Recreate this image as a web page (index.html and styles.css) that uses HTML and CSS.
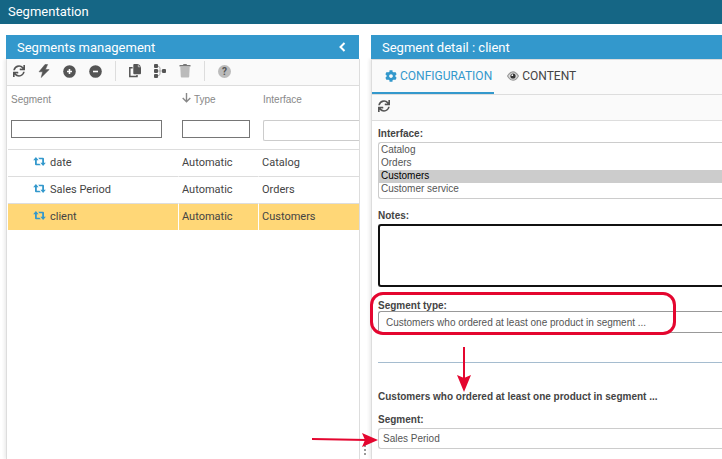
FILE: index.html
```html
<!DOCTYPE html>
<html lang="en">
<head>
    <meta charset="UTF-8">
    <meta name="viewport" content="width=device-width, initial-scale=1.0">
    <title>Segmentation</title>
    <link rel="stylesheet" href="styles.css">
</head>
<body>
    <!-- Shared icon shapes -->
    <svg class="sprite" aria-hidden="true">
        <symbol id="icon-sync" viewBox="0 0 512 512">
            <path d="M440.65 12.57l4 82.77A247.16 247.16 0 0 0 255.83 8C134.73 8 33.91 94.92 12.29 209.82A12 12 0 0 0 24.09 224h49.05a12 12 0 0 0 11.67-9.26 175.91 175.91 0 0 1 317-56.94l-101.46-4.86a12 12 0 0 0-12.57 12v47.41a12 12 0 0 0 12 12H500a12 12 0 0 0 12-12V12a12 12 0 0 0-12-12h-47.37a12 12 0 0 0-11.98 12.57zM255.83 432a175.61 175.61 0 0 1-146-77.8l101.8 4.87a12 12 0 0 0 12.57-12v-47.4a12 12 0 0 0-12-12H12a12 12 0 0 0-12 12V500a12 12 0 0 0 12 12h47.35a12 12 0 0 0 12-12.6l-4.15-82.57A247.17 247.17 0 0 0 255.83 504c121.11 0 221.93-86.92 243.55-201.82a12 12 0 0 0-11.8-14.18h-49.05a12 12 0 0 0-11.67 9.26A175.86 175.86 0 0 1 255.83 432z"/>
        </symbol>
        <symbol id="icon-retweet" viewBox="0 0 14 10">
            <path d="M3 0L6 3.5H4V7.5H7L8.5 9.3H3.2Q2 9.3 2 8.1V3.5H0ZM11 10L8 6.5H10V2.5H7L5.5 .7H10.8Q12 .7 12 1.9V6.5H14Z"/>
        </symbol>
    </svg>

    <header class="topbar">
        <h1>Segmentation</h1>
    </header>

    <main class="workspace">
        <section class="panel">
            <div class="panel-title">
                <h2>Segments management</h2>
                <button class="collapse" aria-label="Collapse">
                    <svg width="7" height="10" viewBox="0 0 7 10"><path d="M5.5 1L1.5 5L5.5 9" fill="none" stroke="currentColor" stroke-width="2"/></svg>
                </button>
            </div>
            <div class="panel-body">
                <div class="toolbar">
                    <button aria-label="Refresh"><svg width="12" height="12"><use href="#icon-sync"/></svg></button>
                    <button aria-label="Compute"><svg width="12" height="14" viewBox="0 0 12 14"><path d="M7 .5L1 7.8H4.6L3.2 13.5L11.2 5.6H7.4L9.6 .5Z" stroke="currentColor" stroke-width=".5"/></svg></button>
                    <button aria-label="Add"><svg width="13" height="13" viewBox="0 0 13 13"><circle cx="6.5" cy="6.5" r="6.3"/><path d="M6.5 4V9M4 6.5H9" stroke="#fff" stroke-width="1.6"/></svg></button>
                    <button aria-label="Remove"><svg width="13" height="13" viewBox="0 0 13 13"><circle cx="6.5" cy="6.5" r="6.3"/><path d="M4 6.5H9" stroke="#fff" stroke-width="1.6"/></svg></button>
                    <span class="divider"></span>
                    <button aria-label="Copy"><svg width="12" height="14" viewBox="0 0 12 14"><path d="M5.2 0H9.5L12 2.5V9.3Q12 10.2 11.1 10.2H5.2Q4.3 10.2 4.3 9.3V.9Q4.3 0 5.2 0Z"/><path d="M9.3 .3V2.8H11.8" fill="none" stroke="#fafafa" stroke-width=".6"/><path d="M3.6 3.8H.8V12.6H8V11" fill="none" stroke="currentColor" stroke-width="1.5"/></svg></button>
                    <button aria-label="Hierarchy"><svg width="12" height="14" viewBox="0 0 12 14"><path d="M4 2L6 3.5V10.5L4 12M4 7H9" fill="none" stroke="#aaa"/><rect width="4" height="4" rx="1"/><rect y="5" width="4" height="4" rx="1"/><rect y="10" width="4" height="4" rx="1"/><rect x="8" y="5" width="4" height="4" rx="1"/></svg></button>
                    <button aria-label="Delete"><svg width="12" height="14" viewBox="0 0 12 14"><path d="M1.3 3H10.7L10.2 12.8Q10.1 13.5 9.4 13.5H2.6Q1.9 13.5 1.8 12.8Z" fill="#bbb"/><path d="M.5 1H4L4.5 0H7.5L8 1H11.5V2.5H.5Z" fill="#777"/></svg></button>
                    <span class="divider"></span>
                    <button aria-label="Help"><span class="help">?</span></button>
                </div>

                <table class="segments">
                    <thead>
                        <tr>
                            <th class="col-segment">
                                <label for="filter-segment">Segment</label>
                                <input type="text" id="filter-segment">
                            </th>
                            <th class="col-type">
                                <label for="filter-type">
                                    <svg width="9" height="10" viewBox="0 0 9 10"><path d="M4.5 0V9M.7 5L4.5 8.8L8.3 5" fill="none" stroke="currentColor" stroke-width="1.4"/></svg>
                                    Type
                                </label>
                                <input type="text" id="filter-type">
                            </th>
                            <th class="col-interface">
                                <label for="filter-interface">Interface</label>
                                <input type="text" id="filter-interface">
                            </th>
                        </tr>
                    </thead>
                    <tbody>
                        <tr>
                            <td><svg width="13" height="9"><use href="#icon-retweet"/></svg>date</td>
                            <td>Automatic</td>
                            <td>Catalog</td>
                        </tr>
                        <tr>
                            <td><svg width="13" height="9"><use href="#icon-retweet"/></svg>Sales Period</td>
                            <td>Automatic</td>
                            <td>Orders</td>
                        </tr>
                        <tr class="selected">
                            <td><svg width="13" height="9"><use href="#icon-retweet"/></svg>client</td>
                            <td>Automatic</td>
                            <td>Customers</td>
                        </tr>
                    </tbody>
                </table>
            </div>
        </section>

        <div class="splitter"><i></i><i></i><i></i></div>

        <section class="panel detail">
            <div class="panel-title">
                <h2>Segment detail : client</h2>
            </div>
            <div class="panel-body">
                <nav class="tabs">
                    <button class="tab active">
                        <svg width="12" height="12" viewBox="0 0 512 512"><path d="M487.4 315.7l-42.6-24.6c4.3-23.2 4.3-47 0-70.2l42.6-24.6c4.9-2.8 7.1-8.6 5.5-14-11.1-35.6-30-67.8-54.7-94.6-3.8-4.1-10-5.1-14.8-2.3L380.8 110c-17.9-15.4-38.5-27.3-60.8-35.1V25.8c0-5.6-3.9-10.5-9.4-11.7-36.7-8.2-74.3-7.8-109.2 0-5.5 1.2-9.4 6.1-9.4 11.7V75c-22.2 7.9-42.8 19.8-60.8 35.1L88.7 85.5c-4.9-2.8-11-1.9-14.8 2.3-24.7 26.7-43.6 58.9-54.7 94.6-1.7 5.4.6 11.2 5.5 14L67.3 221c-4.3 23.2-4.3 47 0 70.2l-42.6 24.6c-4.9 2.8-7.1 8.6-5.5 14 11.1 35.6 30 67.8 54.7 94.6 3.8 4.1 10 5.1 14.8 2.3l42.6-24.6c17.9 15.4 38.5 27.3 60.8 35.1v49.2c0 5.6 3.9 10.5 9.4 11.7 36.7 8.2 74.3 7.8 109.2 0 5.5-1.2 9.4-6.1 9.4-11.7v-49.2c22.2-7.9 42.8-19.8 60.8-35.1l42.6 24.6c4.9 2.8 11 1.9 14.8-2.3 24.7-26.7 43.6-58.9 54.7-94.6 1.5-5.5-.7-11.3-5.6-14.1zM256 336c-44.1 0-80-35.9-80-80s35.9-80 80-80 80 35.9 80 80-35.9 80-80 80z"/></svg>
                        CONFIGURATION
                    </button>
                    <button class="tab">
                        <svg width="12" height="10" viewBox="0 0 12 10"><path d="M.6 5Q3 .8 6 .8T11.4 5Q9 9.2 6 9.2T.6 5Z" fill="#ddd" stroke="#999" stroke-width="1.2"/><circle cx="6" cy="5" r="2.6" fill="#333"/><circle cx="5.3" cy="4.2" r=".9" fill="#fff"/></svg>
                        CONTENT
                    </button>
                </nav>
                <div class="toolbar">
                    <button aria-label="Refresh"><svg width="12" height="12"><use href="#icon-sync"/></svg></button>
                </div>

                <form class="form">
                    <label for="interface">Interface:</label>
                    <select id="interface" class="listbox" size="4">
                        <option>Catalog</option>
                        <option>Orders</option>
                        <option selected>Customers</option>
                        <option>Customer service</option>
                    </select>

                    <label for="notes">Notes:</label>
                    <textarea id="notes"></textarea>

                    <div class="segment-type">
                        <label for="segment-type">Segment type:</label>
                        <select id="segment-type">
                            <option>Customers who ordered at least one product in segment ...</option>
                        </select>
                        <span class="highlight"></span>
                    </div>

                    <div class="rule-area">
                        <hr>
                        <svg class="arrow-down" width="14" height="46" viewBox="0 0 14 46"><path d="M7 0V36" stroke="#e4062f" stroke-width="2"/><path d="M7 45L0 28L7 31L14 28Z" fill="#e4062f"/></svg>
                    </div>

                    <h3>Customers who ordered at least one product in segment ...</h3>

                    <label for="segment">Segment:</label>
                    <div class="segment-value">
                        <input type="text" id="segment" value="Sales Period">
                        <svg class="arrow-right" width="68" height="14" viewBox="0 0 68 14"><path d="M1 6L56 7" stroke="#e4062f" stroke-width="2"/><path d="M67 7L51 0L54 7L51 14Z" fill="#e4062f"/></svg>
                    </div>
                </form>
            </div>
        </section>
    </main>
</body>
</html>
```
FILE: styles.css
```css
* {
    box-sizing: border-box;
}

body {
    display: flex;
    flex-direction: column;
    min-height: 100vh;
    margin: 0;
    background: #fff;
    color: #444;
    font-family: Roboto, sans-serif;
    font-size: 12px;
}

h1, h2, h3 {
    margin: 0;
    font-weight: 400;
}

button {
    padding: 0;
    border: none;
    background: none;
    color: inherit;
    font: inherit;
    cursor: pointer;
}

svg {
    display: block;
    fill: currentColor;
}

.sprite {
    position: absolute;
    width: 0;
    height: 0;
}

.topbar {
    height: 24px;
    padding-left: 8px;
    background: #156685;
    color: #fff;
}

.topbar h1 {
    font-size: 13px;
    line-height: 23px;
}

.workspace {
    display: grid;
    grid-template-columns: 354fr 11px 351fr;
    flex: 1;
    padding: 11px 0 0 6px;
}

.panel {
    display: flex;
    flex-direction: column;
    min-width: 0;
}

.panel-title {
    z-index: 1;
    display: flex;
    align-items: center;
    justify-content: space-between;
    height: 24px;
    margin-right: 1px;
    padding: 0 13px 0 11px;
    background: #3398cc;
    color: #fff;
}

.panel-title h2 {
    font-size: 13px;
    line-height: 23px;
}

.panel-body {
    flex: 1;
    border-right: 1px solid #ddd;
    border-left: 1px solid #ddd;
    box-shadow: -2px 0 3px #eee;
}

.detail .panel-title {
    margin-right: 0;
}

.detail .panel-body {
    border-right: none;
}

.toolbar {
    display: flex;
    align-items: center;
    gap: 13px;
    height: 27px;
    padding: 0 6px 2px;
    border-bottom: 1px solid #ddd;
    background: #fafafa;
    color: #555;
}

.divider {
    width: 1px;
    height: 20px;
    background: #ddd;
}

.help {
    display: block;
    width: 13px;
    height: 13px;
    border-radius: 50%;
    background: #bbb;
    color: #555;
    font-size: 10px;
    font-weight: 700;
    line-height: 13px;
}

/* Segments table */
.segments {
    width: 100%;
    padding-left: 1px;
    border-spacing: 0;
    table-layout: fixed;
}

.col-segment {
    width: 171px;
}

.col-type {
    width: 80px;
}

.segments th {
    height: 64px;
    padding: 7px 0 0 3px;
    border-bottom: 1px solid #ddd;
    color: #888;
    font: 10px "Liberation Sans", Arial, sans-serif;
    text-align: left;
    vertical-align: top;
}

.segments .col-interface {
    padding-left: 4px;
}

.segments label {
    display: flex;
    gap: 3px;
    height: 14px;
    line-height: 14px;
}

.segments input {
    display: block;
    width: 90%;
    height: 18px;
    margin-top: 13px;
    border: 1px solid #767676;
}

.col-type input {
    width: 88%;
}

.segments .col-interface input {
    width: 100%;
    height: 21px;
    border-color: #ccc;
    border-right: none;
    border-radius: 2px 0 0 2px;
}

.segments td {
    height: 27px;
    padding: 0 0 2px 3px;
    border-right: 1px solid #fff;
    border-bottom: 1px solid #ddd;
    font-size: 11px;
    line-height: 13px;
}

.segments td:first-child {
    padding-left: 25px;
}

.segments td:last-child {
    border-right: none;
}

.segments td svg {
    display: inline-block;
    margin-right: 4px;
    color: #3398cc;
}

.segments .selected td {
    height: 26px;
    border-bottom: none;
    background: #ffd777;
}

.splitter {
    display: flex;
    flex-direction: column;
    align-items: center;
    justify-content: flex-end;
    gap: 2px;
    padding: 0 2px 4px 0;
}

.splitter i {
    width: 2px;
    height: 2px;
    background: #999;
}

/* Segment detail */
.tabs {
    display: flex;
    height: 36px;
    border-top: 1px solid #ddd;
    border-bottom: 1px solid #ddd;
    background: #fafafa;
}

.tab {
    display: flex;
    align-items: center;
    gap: 3px;
    padding: 0 0 0 13px;
    border-bottom: 2px solid transparent;
}

.tab.active {
    padding-right: 2px;
    border-bottom-color: #3398cc;
    color: #3398cc;
}

.detail .toolbar {
    height: 26px;
    padding: 0 6px 4px;
}

.form {
    padding: 5px 0 0 6px;
    font: 10px "Liberation Sans", Arial, sans-serif;
}

.form label {
    display: block;
    font-weight: 700;
    line-height: 16px;
}

.form select,
.form textarea,
.form input {
    display: block;
    width: 100%;
    border: 1px solid #ccc;
    border-right: none;
    border-radius: 3px 0 0 3px;
    outline: none;
    background: #fff;
    color: #555;
    font: inherit;
}

.form .listbox {
    height: 57px;
    margin-bottom: 9px;
    padding: 1px 0 0;
    overflow: hidden;
}

.listbox option {
    min-height: 13px;
    padding: 0 2px;
    line-height: 13px;
}

.listbox option:checked {
    background: #ccc;
    color: #000;
}

.form textarea {
    height: 63px;
    border: 2px solid #111;
    border-right: none;
    resize: none;
}

.segment-type {
    position: relative;
    padding-top: 11px;
}

.form .segment-type select {
    height: 22px;
    margin-top: -3px;
    padding: 0 7px;
    border-color: #999;
    appearance: none;
}

/* Red callouts */
.highlight {
    position: absolute;
    top: 5px;
    left: -8px;
    width: 306px;
    height: 43px;
    border: 3px solid #e4062f;
    border-radius: 13px;
}

.rule-area {
    position: relative;
    height: 56px;
    padding-top: 29px;
}

.rule-area hr {
    margin: 0;
    border: none;
    border-top: 1px solid #a5bccf;
}

.arrow-down {
    position: absolute;
    top: 14px;
    left: 79px;
}

.form h3 {
    margin-bottom: 7px;
    font-size: 10px;
    font-weight: 700;
    line-height: 16px;
}

.segment-value {
    position: relative;
}

.segment-value input {
    height: 21px;
    padding: 0 4px;
}

.arrow-right {
    position: absolute;
    top: 5px;
    left: -67px;
}
```
